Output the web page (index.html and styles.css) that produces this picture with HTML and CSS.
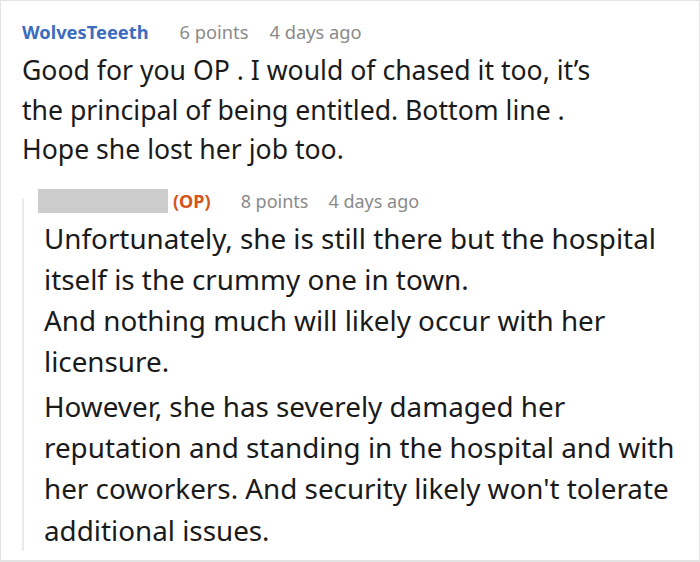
FILE: index.html
```html
<!DOCTYPE html>
<html>
<head>
<meta charset="utf-8">
<link rel="stylesheet" href="styles.css">
</head>
<body>
<div class="frame">
  <div class="comment">
    <div class="meta">
      <span class="author">WolvesTeeeth</span>
      <span class="info">6 points</span>
      <span class="info">4 days ago</span>
    </div>
    <div class="body">Good for you OP . I would of chased it too, it’s the principal of being entitled. Bottom line . Hope she lost her job too.</div>
    <div class="reply">
      <div class="meta meta-reply">
        <span class="redacted"></span>
        <span class="op">(OP)</span>
        <span class="info">8 points</span>
        <span class="info">4 days ago</span>
      </div>
      <div class="body body-reply">
        <p>Unfortunately, she is still there but the hospital itself is the crummy one in town.</p>
        <p>And nothing much will likely occur with her licensure.</p>
        <p class="gap">However, she has severely damaged her reputation and standing in the hospital and with her coworkers. And security likely won't tolerate additional issues.</p>
      </div>
    </div>
  </div>
</div>
</body>
</html>
```

FILE: styles.css
```css
html, body {
  margin: 0;
  padding: 0;
  background: #ffffff;
}

.frame {
  box-sizing: border-box;
  width: 700px;
  height: 562px;
  border: 1px solid #e3e3e3;
  border-bottom-width: 2px;
  overflow: hidden;
  font-family: "Noto Sans", "Open Sans", sans-serif;
  color: #1a1a1a;
}

.comment {
  padding: 17px 0 0 21px;
}

.meta {
  display: flex;
  align-items: center;
  height: 26px;
  font-size: 18.3px;
}

.author {
  color: #3b6cbf;
  font-weight: 700;
  margin-right: 31px;
}

.info {
  color: #8a8a8a;
  margin-right: 21px;
}

.body {
  font-size: 26.6px;
  line-height: 39.5px;
  max-width: 596px;
  margin-top: 7px;
}

.reply {
  position: relative;
  margin-top: 18px;
  padding-left: 16px;
}

.reply::before {
  content: "";
  position: absolute;
  left: 0;
  top: 10px;
  bottom: 0;
  width: 2px;
  background: #ebebeb;
}

.meta-reply {
  font-size: 18px;
}

.redacted {
  display: inline-block;
  width: 130px;
  height: 24px;
  background: #cccccc;
  margin-right: 5px;
}

.op {
  color: #d3541c;
  font-weight: 700;
  margin-right: 30px;
}

.meta-reply .info {
  margin-right: 20px;
}

.body-reply {
  max-width: none;
  margin-top: 4px;
  margin-right: -4px;
  padding-left: 6px;
  line-height: 41.3px;
  font-size: 27.8px;
}

.body-reply p {
  margin: 0;
}

.body-reply .gap {
  margin-top: 3px;
}
```
